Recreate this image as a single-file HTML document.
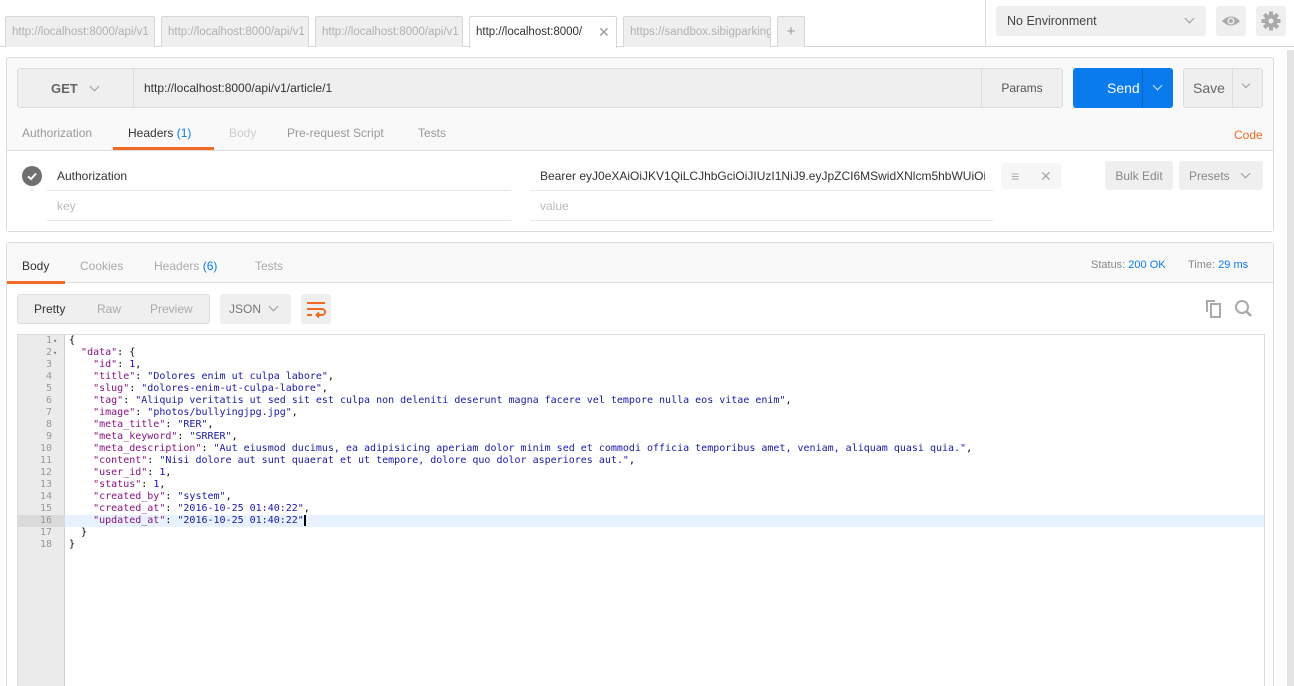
<!DOCTYPE html>
<html><head><meta charset="utf-8"><style>
*{box-sizing:border-box;margin:0;padding:0}
html,body{width:1294px;height:686px;overflow:hidden}
body{background:#fff;font-family:"Liberation Sans",sans-serif;font-size:12px;color:#505050;position:relative}
.a{position:absolute}
.tab{position:absolute;top:16px;height:31px;border:1px solid #d6d6d6;border-bottom:none;background:#efefef;color:#b0b0b0;font-size:11.5px;line-height:30px;padding-left:6px;overflow:hidden;white-space:nowrap;border-radius:2px 2px 0 0}
.btn{position:absolute;background:#efefef;border:1px solid #dcdcdc;border-radius:3px}
.code{font-family:"DejaVu Sans Mono","Liberation Mono",monospace;font-size:10px;line-height:12px;white-space:pre}
.k{color:#881280}.s{color:#1a1aa6}.n{color:#1c00cf}
.chev{display:inline-block;width:7px;height:7px;border-right:1.5px solid #999;border-bottom:1.5px solid #999;transform:rotate(45deg)}
</style></head><body>
<div class="a" style="left:0;top:46px;width:1294px;height:1px;background:#d6d6d6"></div>
<div class="tab" style="left:5px;width:150px">http://localhost:8000/api/v1</div>
<div class="tab" style="left:161px;width:148px">http://localhost:8000/api/v1</div>
<div class="tab" style="left:315px;width:148px">http://localhost:8000/api/v1</div>
<div class="tab" style="left:469px;width:148px;background:#fff;color:#333;height:32px">http://localhost:8000/<span style="position:absolute;left:128px;color:#999;font-size:14px">✕</span></div>
<div class="tab" style="left:623px;width:148px">https://sandbox.sibigparking</div>
<div class="tab" style="left:777px;width:28px;text-align:center;padding:0;color:#999;font-size:15px">+</div>
<div class="a" style="left:985px;top:0;width:1px;height:46px;background:#ddd"></div>
<div class="a" style="left:996px;top:6px;width:210px;height:30px;background:#efefef;border-radius:3px;color:#444;line-height:30px;padding-left:11px;font-size:12.5px">No Environment<span class="chev" style="position:absolute;right:13px;top:9px"></span></div>
<div class="a" style="left:1216px;top:6px;width:30px;height:30px;background:#efefef;border-radius:3px"><svg width="30" height="30"><path d="M6 15 Q15 6 24 15 Q15 24 6 15Z" fill="#aaa"/><circle cx="15" cy="15" r="3.5" fill="#efefef"/><circle cx="15" cy="15" r="2" fill="#aaa"/></svg></div>
<div class="a" style="left:1256px;top:6px;width:30px;height:30px;background:#efefef;border-radius:3px"><svg width="30" height="30"><g fill="#aaa" transform="translate(15 15)"><circle r="6.5"/><rect x="-2" y="-9.5" width="4" height="19"/><rect x="-2" y="-9.5" width="4" height="19" transform="rotate(45)"/><rect x="-2" y="-9.5" width="4" height="19" transform="rotate(90)"/><rect x="-2" y="-9.5" width="4" height="19" transform="rotate(135)"/></g><circle cx="15" cy="15" r="2.5" fill="#efefef"/></svg></div>
<div class="a" style="left:1287px;top:50px;width:7px;height:636px;background:#e4e4e4"></div>

<div class="a" style="left:6px;top:57px;width:1268px;height:175px;border:1px solid #dcdcdc;border-radius:3px;background:#f9f9f9"></div>
<div class="a" style="left:7px;top:150px;width:1266px;height:81px;background:#fff;border-top:1px solid #dcdcdc"></div>
<div class="btn" style="left:17px;top:68px;width:965px;height:40px"></div>
<div class="a" style="left:17px;top:68px;width:117px;height:40px;border-right:1px solid #dcdcdc;font-weight:bold;color:#666;font-size:13px;line-height:41px;padding-left:34px">GET <span class="chev" style="margin-left:10px;margin-bottom:3px"></span></div>
<div class="a" style="left:144px;top:68px;line-height:41px;color:#333">http://localhost:8000/api/v1/article/1</div>
<div class="btn" style="left:981px;top:68px;width:82px;height:40px;line-height:39px;text-align:center;color:#555;border-radius:0 3px 3px 0">Params</div>
<div class="a" style="left:1073px;top:68px;width:100px;height:40px;background:#097bed;border-radius:3px;color:#fff;font-size:14px;line-height:40px;padding-left:34px">Send<div class="a" style="left:69px;top:0;width:1px;height:40px;background:#0663c0"></div><span class="chev" style="position:absolute;left:81px;top:14px;border-color:#cfe4fb"></span></div>
<div class="btn" style="left:1183px;top:68px;width:80px;height:40px;color:#666;font-size:14px;line-height:39px;padding-left:9px">Save<div class="a" style="left:48px;top:0;width:1px;height:38px;background:#dcdcdc"></div><span class="chev" style="position:absolute;left:59px;top:12px;width:6px;height:6px;border-width:1px"></span></div>
<div class="a" style="left:22px;top:126px;color:#999">Authorization</div>
<div class="a" style="left:128px;top:126px;color:#333">Headers <span style="color:#097bed">(1)</span></div>
<div class="a" style="left:113px;top:147px;width:101px;height:3px;background:#f26b25"></div>
<div class="a" style="left:229px;top:126px;color:#ccc">Body</div>
<div class="a" style="left:287px;top:126px;color:#999">Pre-request Script</div>
<div class="a" style="left:418px;top:126px;color:#999">Tests</div>
<div class="a" style="left:1234px;top:128px;color:#f26b25">Code</div>
<div class="a" style="left:22px;top:166px;width:20px;height:20px;border-radius:50%;background:#707070"><svg width="20" height="20"><path d="M6 10.5 L9 13 L14 7.5" stroke="#fff" stroke-width="2" fill="none"/></svg></div>
<div class="a" style="left:57px;top:169px;color:#333">Authorization</div>
<div class="a" style="left:47px;top:190px;width:464px;height:1px;background:#e8e8e8"></div>
<div class="a" style="left:57px;top:199px;color:#bbb">key</div>
<div class="a" style="left:47px;top:220px;width:464px;height:1px;background:#e8e8e8"></div>
<div class="a" style="left:540px;top:169px;width:445px;overflow:hidden;white-space:nowrap;color:#333">Bearer eyJ0eXAiOiJKV1QiLCJhbGciOiJIUzI1NiJ9.eyJpZCI6MSwidXNlcm5hbWUiOiJzdGFmZiJ9</div>
<div class="a" style="left:530px;top:190px;width:463px;height:1px;background:#e8e8e8"></div>
<div class="a" style="left:540px;top:199px;color:#bbb">value</div>
<div class="a" style="left:530px;top:220px;width:463px;height:1px;background:#e8e8e8"></div>
<div class="a" style="left:1001px;top:163px;width:60px;height:26px;background:#f6f6f6;border-radius:3px;color:#aaa;font-size:14px;line-height:26px"><span style="position:absolute;left:10px">≡</span><span style="position:absolute;left:39px">✕</span></div>
<div class="a" style="left:1105px;top:161px;width:68px;height:29px;background:#efefef;border-radius:3px;text-align:center;line-height:30px;color:#888">Bulk Edit</div>
<div class="a" style="left:1179px;top:161px;width:84px;height:29px;background:#efefef;border-radius:3px;line-height:30px;color:#888;padding-left:10px">Presets<span class="chev" style="position:absolute;left:63px;top:9px"></span></div>

<div class="a" style="left:6px;top:242px;width:1268px;height:460px;border:1px solid #dcdcdc;border-radius:3px;background:#fff"></div>
<div class="a" style="left:7px;top:243px;width:1266px;height:40px;background:#f9f9f9;border-bottom:1px solid #dcdcdc"></div>
<div class="a" style="left:22px;top:259px;color:#333">Body</div>
<div class="a" style="left:7px;top:281px;width:58px;height:3px;background:#f26b25"></div>
<div class="a" style="left:80px;top:259px;color:#aaa">Cookies</div>
<div class="a" style="left:154px;top:259px;color:#aaa">Headers <span style="color:#097bed">(6)</span></div>
<div class="a" style="left:255px;top:259px;color:#aaa">Tests</div>
<div class="a" style="left:1091px;top:259px;font-size:11px;color:#888">Status: <span style="color:#097bed">200 OK</span></div>
<div class="a" style="left:1188px;top:259px;font-size:11px;color:#888">Time: <span style="color:#097bed">29 ms</span></div>
<div class="btn" style="left:17px;top:294px;width:193px;height:30px;line-height:29px;font-size:12px"><span style="position:absolute;left:16px;color:#333">Pretty</span><span style="position:absolute;left:79px;color:#aaa">Raw</span><span style="position:absolute;left:132px;color:#aaa">Preview</span></div>
<div class="a" style="left:220px;top:294px;width:71px;height:30px;background:#efefef;border-radius:3px;line-height:31px;padding-left:9px;color:#777">JSON<span class="chev" style="position:absolute;left:50px;top:9px"></span></div>
<div class="a" style="left:301px;top:294px;width:30px;height:30px;background:#efefef;border-radius:3px"><svg width="30" height="30"><g stroke="#f26b25" stroke-width="2" fill="none"><path d="M6 9H24"/><path d="M6 15H21a3 3 0 0 1 0 6H16"/><path d="M6 21H11"/><path d="M18 18.5L15.5 21L18 23.5"/></g></svg></div>
<svg class="a" style="left:1205px;top:299px" width="20" height="20"><g fill="none" stroke="#aaa" stroke-width="2"><path d="M2 13V2H10"/><rect x="6" y="5" width="9" height="13"/></g></svg>
<svg class="a" style="left:1234px;top:299px" width="20" height="20"><circle cx="8" cy="8" r="6" fill="none" stroke="#aaa" stroke-width="2"/><path d="M12.5 12.5L17 17" stroke="#aaa" stroke-width="2.5"/></svg>

<div class="a" style="left:17px;top:334px;width:1248px;height:370px;border:1px solid #dcdcdc;background:#fff"></div>
<div class="a" style="left:18px;top:335px;width:47px;height:370px;background:#ebebeb;border-right:1px solid #d0d0d0"></div>
<div class="a" style="left:18px;top:515px;width:1246px;height:12px;background:#e8f2fe"></div>
<div class="a" style="left:18px;top:515px;width:47px;height:12px;background:#dadada"></div>
<div class="a code" style="left:18px;top:335px;width:34px;text-align:right;color:#999">1
2
3
4
5
6
7
8
9
10
11
12
13
14
15
16
17
18</div>
<div class="a code" style="left:53px;top:335px;color:#777;font-size:7px">▾
▾</div>
<div class="a code" style="left:69px;top:335px;color:#000">{
  <span class="k">"data"</span>: {
    <span class="k">"id"</span>: <span class="n">1</span>,
    <span class="k">"title"</span>: <span class="s">"Dolores enim ut culpa labore"</span>,
    <span class="k">"slug"</span>: <span class="s">"dolores-enim-ut-culpa-labore"</span>,
    <span class="k">"tag"</span>: <span class="s">"Aliquip veritatis ut sed sit est culpa non deleniti deserunt magna facere vel tempore nulla eos vitae enim"</span>,
    <span class="k">"image"</span>: <span class="s">"photos/bullyingjpg.jpg"</span>,
    <span class="k">"meta_title"</span>: <span class="s">"RER"</span>,
    <span class="k">"meta_keyword"</span>: <span class="s">"SRRER"</span>,
    <span class="k">"meta_description"</span>: <span class="s">"Aut eiusmod ducimus, ea adipisicing aperiam dolor minim sed et commodi officia temporibus amet, veniam, aliquam quasi quia."</span>,
    <span class="k">"content"</span>: <span class="s">"Nisi dolore aut sunt quaerat et ut tempore, dolore quo dolor asperiores aut."</span>,
    <span class="k">"user_id"</span>: <span class="n">1</span>,
    <span class="k">"status"</span>: <span class="n">1</span>,
    <span class="k">"created_by"</span>: <span class="s">"system"</span>,
    <span class="k">"created_at"</span>: <span class="s">"2016-10-25 01:40:22"</span>,
    <span class="k">"updated_at"</span>: <span class="s">"2016-10-25 01:40:22"</span><span style="border-left:2px solid #000"></span>
  }
}</div>
</body></html>
